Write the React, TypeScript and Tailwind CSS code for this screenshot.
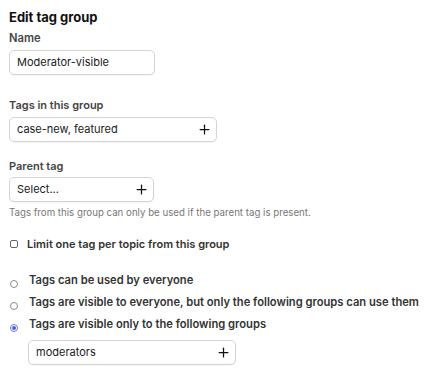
import { Plus } from "lucide-react";

function TagInput({ value, width, plus = true }: { value: string; width: string; plus?: boolean }) {
  return (
    <div
      className={`${width} h-[25px] flex items-center justify-between rounded-[5px] border border-[#d4d4d4] bg-white pl-[7px] pr-[4px] shadow-[0_1px_1px_rgba(0,0,0,0.04)]`}
    >
      <span className="text-[11px] text-[#1a1a1a]">{value}</span>
      {plus && <Plus size={15} strokeWidth={2} className="text-[#111]" />}
    </div>
  );
}

function Radio({ checked, label }: { checked?: boolean; label: string }) {
  return (
    <label className="flex items-center gap-[11px] h-[16px]">
      <span
        className={`shrink-0 mt-[8px] ml-[1px] w-[8px] h-[8px] rounded-full border flex items-center justify-center ${
          checked ? "border-[#6b7ce6]" : "border-[#8a8a8a]"
        }`}
      >
        {checked && <span className="w-[4px] h-[4px] rounded-full bg-[#4a5fe0]" />}
      </span>
      <span className="text-[11.2px] font-semibold text-[#333] whitespace-nowrap">{label}</span>
    </label>
  );
}

export default function App() {
  return (
    <div className="w-[426px] h-[375px] bg-white px-[9px] pt-[8px] font-['Inter',sans-serif] text-[#222]">
      <h1 className="text-[13px] font-bold leading-[18px] text-[#111]">Edit tag group</h1>

      <div className="mt-[4px] text-[11.2px] font-semibold text-[#444] leading-[16px]">Name</div>
      <div className="mt-[4px]">
        <TagInput value="Moderator-visible" width="w-[146px]" plus={false} />
      </div>

      <div className="mt-[22px] text-[11px] font-semibold text-[#444] leading-[16px]">Tags in this group</div>
      <div className="mt-[4px]">
        <TagInput value="case-new, featured" width="w-[208px]" />
      </div>

      <div className="mt-[16px] text-[11px] font-semibold text-[#444] leading-[16px]">Parent tag</div>
      <div className="mt-[3px]">
        <TagInput value="Select..." width="w-[145px]" />
      </div>
      <p className="mt-[4px] text-[9.7px] text-[#777] leading-[13px]">
        Tags from this group can only be used if the parent tag is present.
      </p>

      <label className="mt-[17px] flex items-center gap-[9px] h-[16px]">
        <span className="shrink-0 ml-[1px] w-[8px] h-[8px] rounded-[2px] border border-[#666] bg-white" />
        <span className="text-[11px] font-semibold text-[#333]">Limit one tag per topic from this group</span>
      </label>

      <div className="mt-[20px] flex flex-col gap-[6px]">
        <Radio label="Tags can be used by everyone" />
        <Radio label="Tags are visible to everyone, but only the following groups can use them" />
        <Radio checked label="Tags are visible only to the following groups" />
      </div>

      <div className="mt-[8px] ml-[19px]">
        <TagInput value="moderators" width="w-[208px]" />
      </div>
    </div>
  );
}
